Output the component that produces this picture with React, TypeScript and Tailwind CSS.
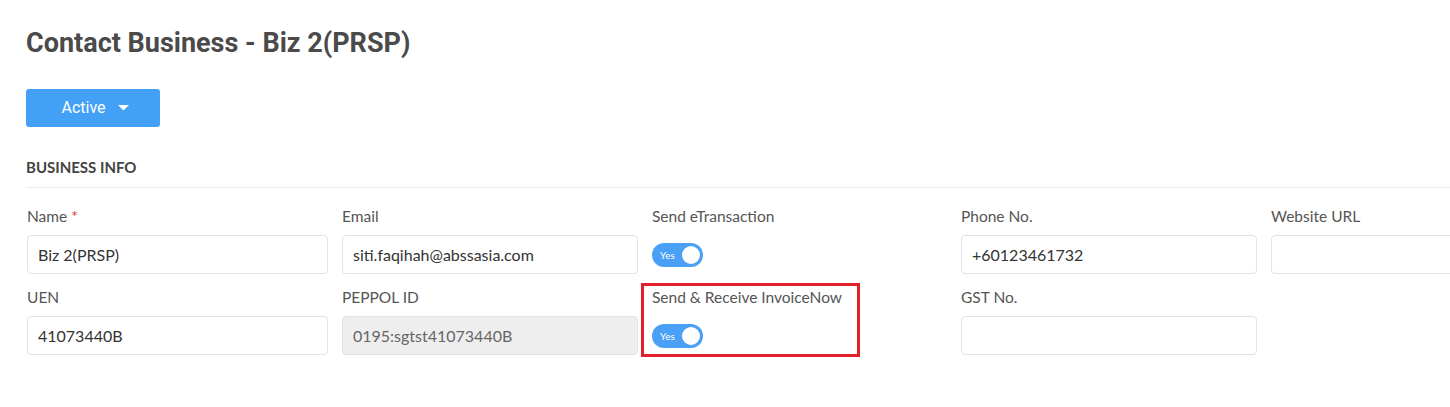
import React from "react";

const fieldFont = { fontFamily: "Lato, 'Open Sans', sans-serif" };

function Label({ children, required }: { children: React.ReactNode; required?: boolean }) {
	return (
		<div className="mb-[9px] h-[20px] text-[15.5px] leading-[20px] text-[#555]">
			{children}
			{required && <span className="ml-1 text-[#e53935]">*</span>}
		</div>
	);
}

function Field({ label, value, required, disabled }: { label: string; value?: string; required?: boolean; disabled?: boolean }) {
	return (
		<div>
			<Label required={required}>{label}</Label>
			<div
				className={`flex h-[39px] items-center rounded-[4px] border border-[#e2e2e2] px-[10px] text-[16px] ${
					disabled ? "bg-[#eeeeee] text-[#666]" : "bg-white text-[#333]"
				}`}
			>
				{value}
			</div>
		</div>
	);
}

function Toggle() {
	return (
		<div className="flex h-[39px] items-center">
			<div className="flex h-[24px] w-[51px] items-center justify-between rounded-full bg-[#4aa0f5] pl-[8px] pr-[3px]">
				<span className="text-[10px] leading-none text-white">Yes</span>
				<span className="h-[18px] w-[18px] rounded-full bg-white" />
			</div>
		</div>
	);
}

export default function App() {
	return (
		<div className="h-[407px] w-[1450px] overflow-hidden bg-white" style={fieldFont}>
			<div className="pl-[26px] pt-[26px]">
				<h1 className="text-[27px] font-bold leading-[34px] text-[#4a4a4a]" style={{ fontFamily: "Roboto, sans-serif" }}>
					Contact Business - Biz 2(PRSP)
				</h1>

				<button
					className="mt-[29px] flex h-[38px] w-[134px] items-center justify-center gap-[12px] rounded-[3px] bg-[#42a0f5] pl-[4px] text-[16px] text-white"
					style={{ fontFamily: "Roboto, sans-serif" }}
				>
					Active
					<svg width="11" height="6" viewBox="0 0 11 6">
						<path d="M0 0h11L5.5 5.5z" fill="white" />
					</svg>
				</button>

				<div className="mt-[30px] border-b border-[#ececec] pb-[10px] text-[15px] font-bold leading-[20px] text-[#444]">BUSINESS INFO</div>

				<div className="mt-[18px] grid grid-cols-[301px_296px_295px_296px_296px] gap-x-[14px] gap-y-[13px] pl-px">
					<Field label="Name" value="Biz 2(PRSP)" required />
					<Field label="Email" value="siti.faqihah@abssasia.com" />
					<div>
						<Label>Send eTransaction</Label>
						<Toggle />
					</div>
					<Field label="Phone No." value="+60123461732" />
					<Field label="Website URL" />

					<Field label="UEN" value="41073440B" />
					<Field label="PEPPOL ID" value="0195:sgtst41073440B" disabled />
					<div className="relative">
						<Label>Send &amp; Receive InvoiceNow</Label>
						<Toggle />
						<div className="absolute -left-[11px] -top-[13px] h-[74px] w-[219px] translate-y-[9px] border-[3px] border-[#e3202b]" />
					</div>
					<Field label="GST No." />
					<div />
				</div>
			</div>
		</div>
	);
}
